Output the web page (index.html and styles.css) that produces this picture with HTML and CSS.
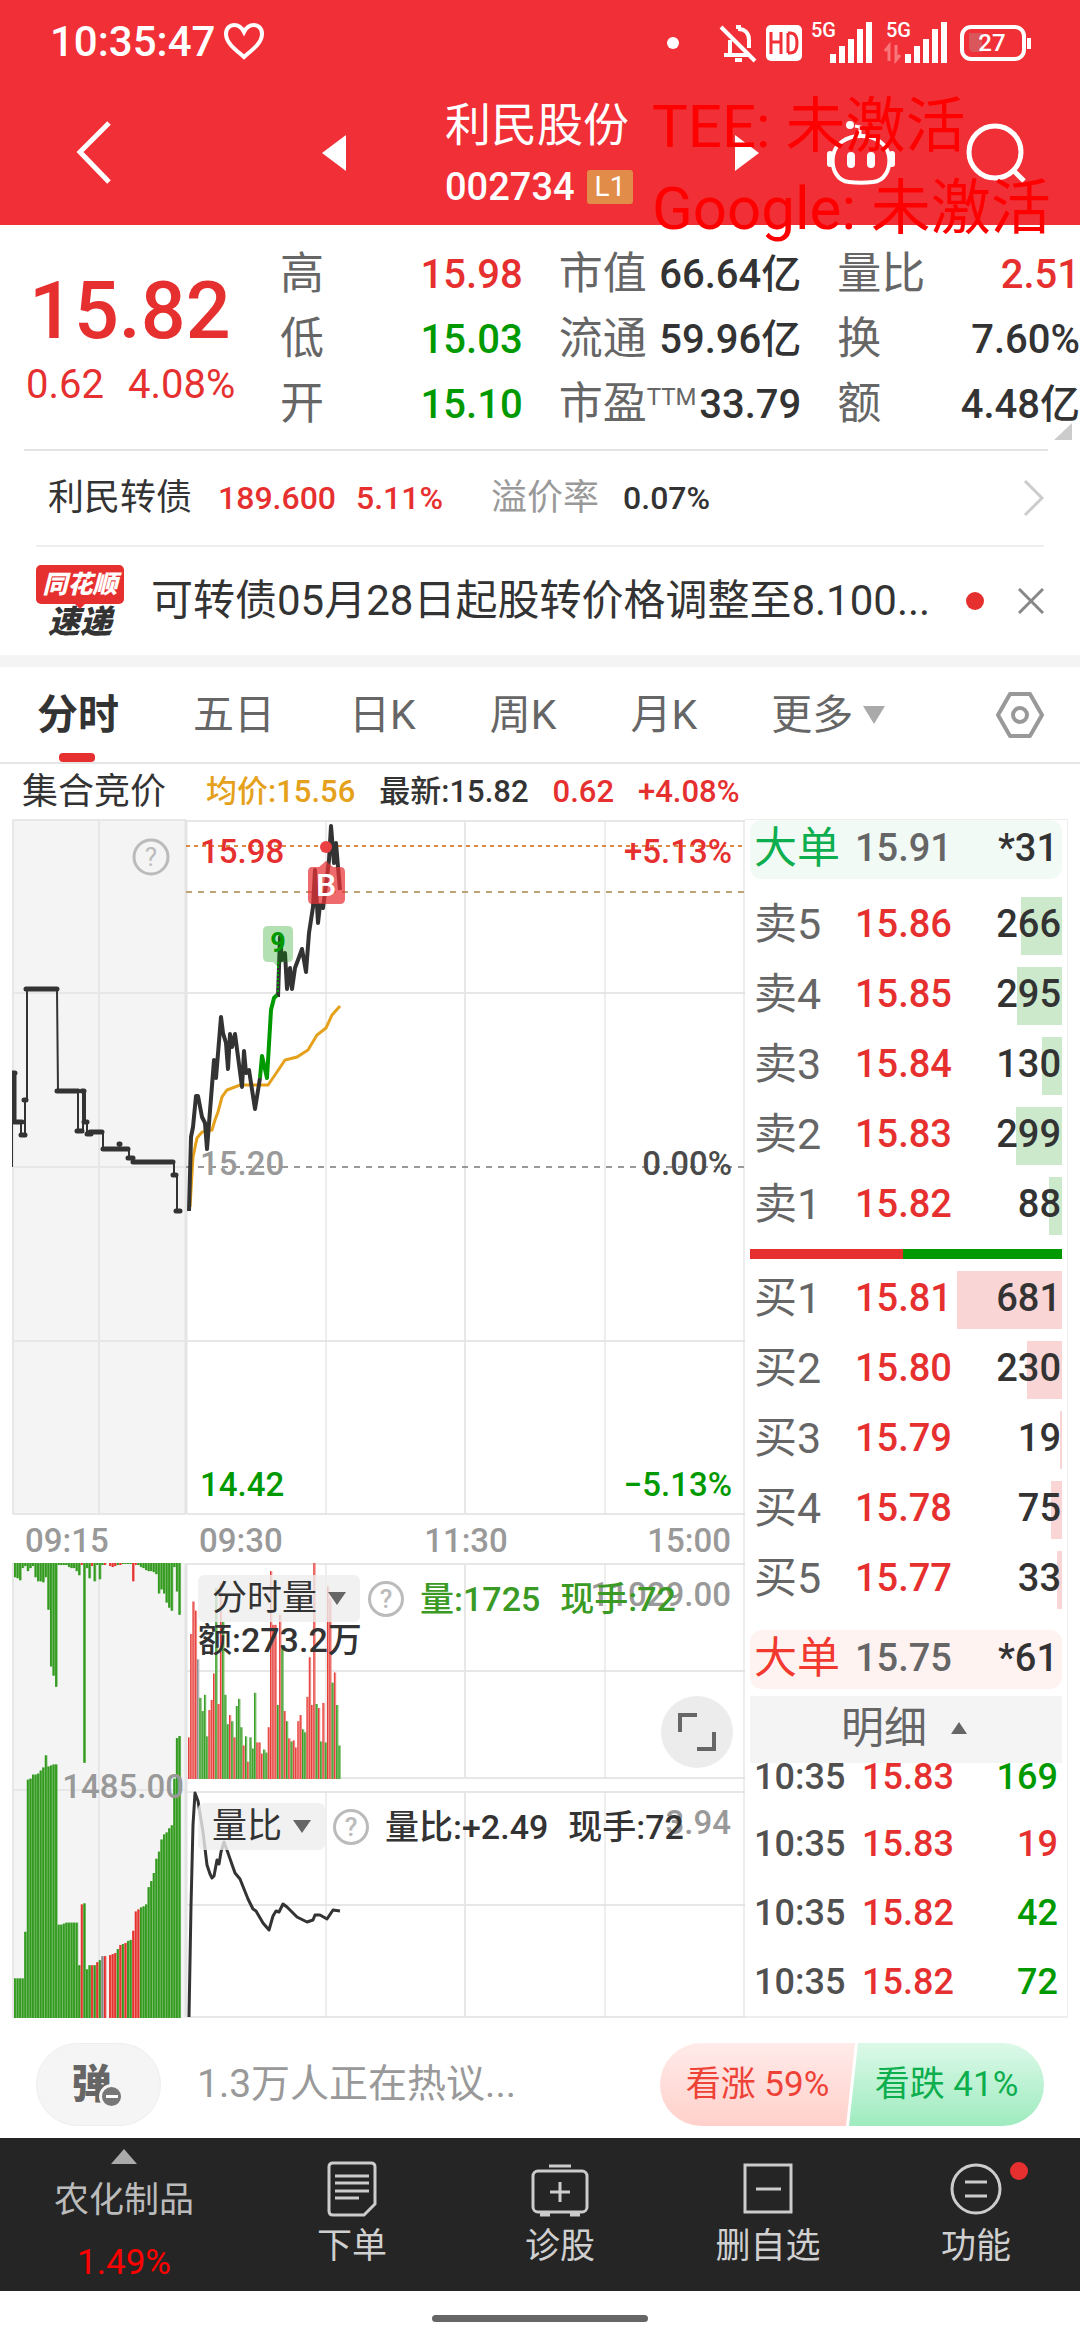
FILE: index.html
```
<!DOCTYPE html>
<html lang="zh-CN">
<head>
    <meta charset="UTF-8">
    <meta name="viewport" content="width=device-width, initial-scale=1.0">
    <title>利民股份 002734</title>
    <link rel="stylesheet" href="styles.css">
</head>
<body>
    <header class="top">
        <div class="statusbar">
            <span class="clock">10:35:47</span>
            <svg class="heart" width="42" height="38" viewBox="0 0 42 38"><path d="M21 35C13 28 3 21 3 12 3 6 7 3 11 3c4 0 8 3 10 7 2-4 6-7 10-7 4 0 8 3 8 9 0 9-10 16-18 23z" fill="none" stroke="#fff" stroke-width="4"/></svg>
            <svg class="signals" width="368" height="50" viewBox="664 13 368 50" fill="none" stroke="#fff">
                <circle cx="673" cy="40" r="6" fill="#fff" stroke="none"/>
                <path d="M721 24l34 34M724 52h24M730 51V37M738 26c7 0 11 4 11 11v8" stroke-width="4"/>
                <path d="M735 57h7M736 24h5" stroke-width="4"/>
                <rect x="766" y="22" width="36" height="36" rx="5" fill="#fff" stroke="none"/>
                <path d="M771 29v22M781 29v22M771 39h10M788 30v20M788 30h2c5 0 7 3 7 10s-2 10-7 10h-2" stroke="#f12f37" stroke-width="3"/>
                <path d="M833 60V51M842 60V43M851 60V36" stroke-width="6"/>
                <path d="M860 60V26M869 60V19" stroke-width="6"/>
                <path d="M908 60V51M917 60V43M926 60V36" stroke-width="6"/>
                <path d="M935 60V26M944 60V19" stroke-width="6"/>
                <path d="M889 58V43l-4 5M896 42v15l4-5" stroke="#f8777b" stroke-width="3"/>
                <rect x="962" y="24" width="62" height="32" rx="9" stroke-width="4"/>
                <path d="M969 30h13v19h-10l-3-3z" fill="#d9565b" stroke="none"/>
                <path d="M1029 35v11" stroke-width="4"/>
                <text class="sig-text" x="811" y="34">5G</text>
                <text class="sig-text" x="886" y="34">5G</text>
                <text class="bat-text" x="992" y="48" text-anchor="middle">27</text>
            </svg>
        </div>
        <nav class="titlebar">
            <button class="icon-btn" aria-label="返回"><svg width="40" height="66" viewBox="0 0 40 66"><path d="M34 3L5 32l29 30" fill="none" stroke="#fff" stroke-width="5"/></svg></button>
            <button class="icon-btn prev" aria-label="上一只"><svg width="24" height="36"><path d="M24 0v36L0 18z" fill="#fff"/></svg></button>
            <div class="title">
                <h1>利民股份</h1>
                <div class="code">002734 <span class="level">L1</span></div>
            </div>
            <button class="icon-btn next" aria-label="下一只"><svg width="24" height="36"><path d="M0 0v36l24-18z" fill="#fff"/></svg></button>
            <button class="icon-btn robot" aria-label="助手"><svg width="70" height="64" viewBox="0 0 70 64" fill="none" stroke="#fff" stroke-width="4"><path d="M35 15c15 0 26 8 28 20 2 14-5 25-16 26-8 1-16 1-24 0C12 60 5 49 7 35c2-12 13-20 28-20z"/><path d="M4 33v10M66 33v10" stroke-width="6" stroke-linecap="round"/><path d="M25 35v8M45 35v8" stroke-width="8" stroke-linecap="round"/><path d="M34 13V6l-5-1" stroke-width="3"/><circle cx="24" cy="4" r="4" fill="#fff" stroke="none"/></svg></button>
            <button class="icon-btn search" aria-label="搜索"><svg width="60" height="60" viewBox="0 0 60 60" fill="none" stroke="#fff" stroke-width="5"><circle cx="29" cy="29" r="26"/><path d="M47 47l11 11"/></svg></button>
        </nav>
        <div class="watermark">TEE: 未激活<br>Google: 未激活</div>
    </header>

    <section class="quote">
        <div class="price-box">
            <div class="price red">15.82</div>
            <div class="change red"><span>0.62</span><span>4.08%</span></div>
        </div>
        <dl class="stats">
            <div><dt>高</dt><dd class="red">15.98</dd></div>
            <div><dt>市值</dt><dd>66.64亿</dd></div>
            <div><dt>量比</dt><dd class="red">2.51</dd></div>
            <div><dt>低</dt><dd class="green">15.03</dd></div>
            <div><dt>流通</dt><dd>59.96亿</dd></div>
            <div><dt>换</dt><dd>7.60%</dd></div>
            <div><dt>开</dt><dd class="green">15.10</dd></div>
            <div><dt>市盈<sup>TTM</sup></dt><dd>33.79</dd></div>
            <div><dt>额</dt><dd>4.48亿</dd></div>
        </dl>
        <svg class="corner" width="18" height="17"><path d="M18 0v17H0z" fill="#ccc"/></svg>
    </section>

    <a class="bond" href="#bond">
        <span class="bond-name">利民转债</span>
        <b class="red">189.600</b>
        <b class="red">5.11%</b>
        <span class="premium">溢价率</span>
        <b>0.07%</b>
        <svg width="24" height="38" viewBox="0 0 24 38"><path d="M3 2l17 17L3 36" fill="none" stroke="#ccc" stroke-width="3"/></svg>
    </a>

    <section class="news">
        <div class="news-logo"><span class="logo-top">同花顺</span><span class="logo-bottom">速递</span></div>
        <a class="news-title" href="#news">可转债05月28日起股转价格调整至8.100...</a>
        <i class="dot"></i>
        <button class="icon-btn" aria-label="关闭"><svg width="26" height="26"><path d="M1 1l24 24M25 1L1 25" stroke="#888" stroke-width="3"/></svg></button>
    </section>

    <nav class="tabs">
        <button class="tab active">分时</button>
        <button class="tab">五日</button>
        <button class="tab">日K</button>
        <button class="tab">周K</button>
        <button class="tab">月K</button>
        <button class="tab more">更多<svg width="22" height="18"><path d="M0 0h22L11 18z" fill="#aaa"/></svg></button>
        <button class="icon-btn settings" aria-label="设置"><svg width="50" height="46" viewBox="0 0 50 46" fill="none" stroke="#999" stroke-width="4"><path d="M15 2h20l12 21-12 21H15L3 23z" stroke-linejoin="round"/><circle cx="25" cy="23" r="7"/></svg></button>
    </nav>

    <div class="summary">
        <span class="auction-label">集合竞价</span>
        <span class="orange">均价:15.56</span>
        <span>最新:15.82</span>
        <span class="red">0.62</span>
        <span class="red">+4.08%</span>
    </div>

    <main class="board">
        <section class="chart">
            <svg class="chart-svg" viewBox="12 819 733 1199" fill="none">
                <!-- auction panel -->
                <g fill="#f4f4f4">
                    <path d="M12 819h174v695H12zM12 1563h174v455H12z"/>
                </g>
                <g stroke="#e7e7e7" stroke-width="2">
                    <path d="M13 820v694M99 820v694M13 820h173M13 993h173M13 1167h173M13 1341h173M13 1514h173"/>
                    <path d="M13 1563v455M99 1563v455M13 1790h173"/>
                    <path d="M187 821h558M187 993h558M187 1341h558M187 1514h558M465 821v693"/>
                    <path d="M187 1564h558M187 1671h558M187 1778h558M187 1792h558M187 1905h558M187 2017h558M465 1564v214M465 1792v225"/>
                </g>
                <path d="M186 820v694M186 1563v454" stroke="#e4e4e4" stroke-width="3"/>
                <path d="M326 821v693M605 821v693M326 1564v214M605 1564v214M326 1792v225M605 1792v225M744 821v1196" stroke="#ddd"/>

                <!-- level lines -->
                <path d="M186 846h558" stroke="#d98a45" stroke-width="2" stroke-dasharray="4 4"/>
                <path d="M186 892h558" stroke="#bda377" stroke-width="2" stroke-dasharray="6 6"/>
                <path d="M186 1167h558" stroke="#999" stroke-width="2" stroke-dasharray="6 6"/>

                <g class="axis">
                    <text class="fill-red" x="200" y="863">15.98</text>
                    <text class="fill-muted" x="200" y="1175">15.20</text>
                    <text class="fill-green" x="200" y="1496">14.42</text>
                    <text class="fill-red" x="732" y="863" text-anchor="end">+5.13%</text>
                    <text class="fill-dark" x="732" y="1175" text-anchor="end">0.00%</text>
                    <text class="fill-green" x="732" y="1496" text-anchor="end">−5.13%</text>
                    <text class="fill-muted" x="25" y="1552">09:15</text>
                    <text class="fill-muted" x="199" y="1552">09:30</text>
                    <text class="fill-muted" x="466" y="1552" text-anchor="middle">11:30</text>
                    <text class="fill-muted" x="731" y="1552" text-anchor="end">15:00</text>
                    <text class="fill-muted" x="731" y="1606" text-anchor="end">11029.00</text>
                    <text class="fill-muted" x="731" y="1834" text-anchor="end">3.94</text>
                </g>

                <!-- auction price steps -->
                <path d="M12 1167V1073h3v49h6v13h4v-35h2V989h30l1 102h20v40h5v-40h2v31h2v12h3v-2h13v17h26v9h4v4h41v13h3v36h4" stroke="#333" stroke-width="2"/>
                <path d="M12 1073h3M14 1122h8M21 1135h4M24 1100h2M26 989h31M57 1091h21M77 1131h5M82 1091h2M84 1122h3M87 1134h4M90 1132h12M103 1149h25M119 1144h1M128 1158h5M133 1162h40M173 1175h3M176 1211h4M14 1075v46" stroke="#333" stroke-width="5" stroke-linecap="round"/>

                <polyline points="190,1207 193,1157 197,1138 202,1132 212,1130 215,1120 218,1112 222,1097 227,1090 240,1085 268,1085 277,1072 285,1060 297,1057 308,1050 317,1035 326,1028 332,1015 340,1006" stroke="#e5a11b" stroke-width="3"/>
                <g stroke="#333" stroke-width="4" stroke-linejoin="round">
                    <polyline points="189,1211 191,1137 193,1127 196,1096 198,1096 202,1117 205,1123 207,1149 214,1060 216,1078 221,1017 223,1033 226,1043 228,1069 230,1034 232,1047 235,1034 242,1087 244,1051 246,1073 249,1070 255,1109 260,1078"/>
                    <polyline points="278,997 280,937 282,960 285,953 287,989 290,968 292,989 295,968 298,960 302,949 306,972 309,933 313,907 315,870 318,923 320,905 323,908 327,877 329,860 331,826 334,863 336,843 338,867 340,890"/>
                </g>
                <polyline points="260,1078 262,1056 267,1078 271,1010 274,998 277,995" stroke="#090" stroke-width="4" stroke-linejoin="round"/>
                <path d="M278 992v-30" stroke="#090" stroke-width="2" stroke-dasharray="2 2"/>

                <path d="M268 926h20q5 0 5 5v26q0 5-5 5h-5l-5 5-5-5h-5q-5 0-5-5v-26q0-5 5-5z" fill="#090" fill-opacity=".3"/>
                <text class="mark-nine" x="278" y="952" text-anchor="middle">9</text>
                <circle cx="326" cy="847" r="6" fill="#ea4044"/>
                <path d="M312 867h7l7-6 7 6h7q5 0 5 5v27q0 5-5 5h-28q-4 0-4-5v-27q0-5 4-5z" fill="#e93035" fill-opacity=".72"/>
                <text class="mark-b" x="326" y="896" text-anchor="middle">B</text>

                <circle cx="151" cy="857" r="17" stroke="#bbb" stroke-width="3"/>
                <text class="help-text" x="151" y="866" text-anchor="middle">?</text>

                <g id="auctionTop"></g>
                <g id="auctionBottom"></g>
                <g id="volume"></g>
                <text class="axis fill-muted" x="184" y="1798" text-anchor="end">1485.00</text>

                <polyline points="189,2017 191,1906 193,1825 195,1793 198,1801 203,1832 207,1865 210,1874 212,1878 214,1876 217,1860 219,1864 221,1852 224,1842 228,1853 235,1873 240,1879 248,1899 253,1909 256,1911 263,1923 269,1930 273,1916 276,1911 279,1912 283,1904 287,1907 297,1917 307,1922 313,1920 315,1915 320,1915 327,1919 333,1910 340,1911" stroke="#333" stroke-width="3" stroke-linejoin="round"/>
            </svg>

            <div class="indicator volume-bar">
                <button class="picker">分时量<svg width="18" height="13"><path d="M0 0h18L9 13z" fill="#666"/></svg></button>
                <button class="help">?</button>
                <span class="ind-green">量:1725</span>
                <span class="ind-green">现手:72</span>
                <span class="amount">额:273.2万</span>
            </div>
            <div class="indicator ratio-bar">
                <button class="picker">量比<svg width="18" height="13"><path d="M0 0h18L9 13z" fill="#666"/></svg></button>
                <button class="help">?</button>
                <span>量比:+2.49</span>
                <span>现手:72</span>
            </div>
            <button class="expand" aria-label="全屏"><svg width="38" height="38" fill="none" stroke="#666" stroke-width="4"><path d="M2 19V2h17M36 19v17H19"/></svg></button>
        </section>

        <section class="book">
            <div class="big-order sell"><span>大单</span><b>15.91</b><b>*31</b></div>
            <div class="levels" id="asks"></div>
            <div class="balance"><i></i></div>
            <div class="levels" id="bids"></div>
            <div class="big-order buy"><span>大单</span><b>15.75</b><b>*61</b></div>
            <button class="detail">明细<svg width="16" height="12"><path d="M0 12h16L8 0z" fill="#666"/></svg></button>
            <div class="ticks">
                <div><span>10:35</span><b class="red">15.83</b><b class="green">169</b></div>
                <div><span>10:35</span><b class="red">15.83</b><b class="red">19</b></div>
                <div><span>10:35</span><b class="red">15.82</b><b class="green">42</b></div>
                <div><span>10:35</span><b class="red">15.82</b><b class="green">72</b></div>
            </div>
        </section>
    </main>

    <section class="chat">
        <button class="danmu" aria-label="弹幕"><span>弹</span><i></i></button>
        <a class="talk" href="#talk">1.3万人正在热议...</a>
        <div class="vote">
            <button class="up">看涨 59%</button>
            <button class="down">看跌 41%</button>
        </div>
    </section>

    <nav class="bottom">
        <a class="sector" href="#sector"><svg width="26" height="15"><path d="M0 15h26L13 0z" fill="#aaa"/></svg><span>农化制品</span><em>1.49%</em></a>
        <a href="#trade"><svg width="50" height="56" viewBox="0 0 50 56" fill="none" stroke="#ccc" stroke-width="3"><path d="M6 2h38q4 0 4 4v37L37 54H6q-4 0-4-4V6q0-4 4-4zM8 15h34M8 22h34M8 30h34M8 37h24"/></svg>下单</a>
        <a href="#diagnose"><svg width="58" height="56" viewBox="0 0 58 56" fill="none" stroke="#ccc" stroke-width="3"><rect x="2" y="10" width="54" height="41" rx="5"/><path d="M18 5h22M29 21v20M19 31h20"/><path d="M9 53h10M39 53h10" stroke-width="5"/></svg>诊股</a>
        <a href="#remove"><svg width="50" height="56" viewBox="0 0 50 56" fill="none" stroke="#ccc" stroke-width="3"><path d="M2 4h46v47H2zM13 28h25"/></svg>删自选</a>
        <a class="features" href="#features"><svg width="52" height="56" viewBox="0 0 52 56" fill="none" stroke="#ccc" stroke-width="3"><circle cx="26" cy="28" r="24"/><path d="M15 21h22M15 35h22"/></svg>功能<i class="dot"></i></a>
    </nav>
    <div class="home"><i></i></div>

    <script>
        const NS = 'http://www.w3.org/2000/svg';
        const BAR_UNIT = 1.014;
        const COLORS = {
            g: ['#339a1f', '#76bd69'],
            r: ['#e5342f', '#f08a86'],
            x: ['#888888', '#bbbbbb']
        };

        // bars is "height+colour" separated by spaces, e.g. "14g 18r"
        function drawBars(id, bars, x, pitch, baseY, down, thin) {
            const group = document.getElementById(id);
            bars.split(' ').forEach((bar, i) => {
                const height = parseInt(bar, 10) * BAR_UNIT;
                const colors = COLORS[bar.slice(-1)];
                [[pitch, colors[1]], [pitch * (thin ? 0.4 : 0.7), colors[0]]].forEach(([width, color]) => {
                    const rect = document.createElementNS(NS, 'rect');
                    rect.setAttribute('x', x + i * pitch);
                    rect.setAttribute('y', down ? baseY : baseY - height);
                    rect.setAttribute('width', width);
                    rect.setAttribute('height', height);
                    rect.setAttribute('fill', color);
                    group.appendChild(rect);
                });
            });
        }

        drawBars('auctionTop', '14g 15g 17g 5g 3g 8g 5g 3g 14g 18g 18g 19g 14g 46g 102g 111g 122g 2g 2g 2g 2g 4g 5g 5g 8g 12g 2r 197g 5g 15g 3r 18g 2g 16g 2g 2r 0g 3r 4r 3r 2g 2r 1g 1g 1g 1g 18r 2r 2g 4g 5g 7g 8g 8g 9g 11g 30g 26g 30g 39g 44g 47g 4g 28g 51g', 14, 2.57, 1563, true);
        drawBars('auctionBottom', '39g 39g 39g 39g 85g 235g 236g 240g 240g 241g 244g 247g 259g 248g 249g 250g 250g 92g 92g 93g 94g 94g 94g 94g 94g 52g 112r 113g 48g 52g 52r 52g 55r 57g 61x 61r 0r 62r 63r 64r 68g 72r 73g 74r 76g 77g 86r 105r 107r 109g 110g 112g 129g 135g 143g 157g 164g 176g 181g 183g 187g 190g 236g 276g 278g', 14, 2.57, 2018);
        drawBars('volume', '41r 143r 175r 166r 118x 80g 67g 83g 42g 68r 78r 104r 188g 74r 193r 155g 83g 54g 63r 57g 41r 72g 79g 51g 33r 42g 17r 41g 30g 85g 36r 36r 25r 29g 26g 51r 205r 152r 152r 73g 162r 132g 67r 57g 40r 37g 38r 31r 57r 63r 49g 46g 81r 120r 73r 213r 74g 70r 37g 75r 36g 190r 178r 95g 105r 73g 33g', 188, 2.28, 1779, false, true);

        // label, price, volume, depth bar width in % of the row
        const asks = [['卖5', '15.86', 266, 13], ['卖4', '15.85', 295, 14.5], ['卖3', '15.84', 130, 6.5], ['卖2', '15.83', 299, 14.8], ['卖1', '15.82', 88, 4.2]];
        const bids = [['买1', '15.81', 681, 33.6], ['买2', '15.80', 230, 11.2], ['买3', '15.79', 19, 0.7], ['买4', '15.78', 75, 3.5], ['买5', '15.77', 33, 1.6]];

        function drawLevels(id, rows) {
            document.getElementById(id).innerHTML = rows.map(([label, price, volume, depth]) =>
                `<div class="level-row"><i style="width: ${depth}%"></i><span>${label}</span><b class="red">${price}</b><b>${volume}</b></div>`
            ).join('');
        }

        drawLevels('asks', asks);
        drawLevels('bids', bids);
    </script>
</body>
</html>
```
FILE: styles.css
```
* {
    box-sizing: border-box;
}
body {
    margin: 0;
    background: #fff;
    color: #333;
    font-family: Roboto, "Noto Sans CJK SC", sans-serif;
    font-size: 36px;
}
button {
    padding: 0;
    border: none;
    background: none;
    color: inherit;
    font: inherit;
    cursor: pointer;
}
a {
    color: inherit;
    text-decoration: none;
}
svg {
    display: block;
    flex: none;
}
b {
    font-weight: 500;
}
.red {
    color: #e6302f;
}
.green {
    color: #090;
}
.orange {
    color: #e5a11b;
}
.icon-btn {
    display: flex;
    flex: none;
}
.dot {
    width: 18px;
    height: 18px;
    border-radius: 50%;
    background: #e6302f;
    flex: none;
}

/* header */
.top {
    position: relative;
    background: #f12f37;
    color: #fff;
}
.statusbar {
    display: flex;
    align-items: center;
    height: 80px;
    padding: 2px 48px 0 50px;
}
.clock {
    font-size: 42px;
    font-weight: 500;
}
.heart {
    margin-left: 8px;
}
.signals {
    margin-left: auto;
    overflow: visible;
}
.sig-text {
    font-size: 20px;
    font-weight: 500;
    fill: #fff;
    stroke: none;
}
.bat-text {
    font-size: 24px;
    font-weight: 500;
    fill: #fff;
    stroke: none;
}
.titlebar {
    display: flex;
    align-items: center;
    height: 145px;
    padding: 0 54px 0 75px;
}
.prev {
    margin-left: 207px;
}
.title {
    margin-left: 99px;
    padding-top: 5px;
    white-space: nowrap;
}
.title h1 {
    margin: 0;
    font-size: 46px;
    font-weight: 400;
    line-height: 64px;
}
.code {
    display: flex;
    align-items: center;
    gap: 12px;
    font-size: 38px;
    font-weight: 500;
    line-height: 60px;
}
.level {
    padding: 0 8px;
    border-radius: 3px;
    background: #e28c4a;
    font-size: 28px;
    font-weight: 400;
    line-height: 34px;
}
.next {
    margin-left: auto;
}
.robot {
    margin-left: 67px;
}
.search {
    margin-left: 70px;
}
.watermark {
    position: absolute;
    top: 86px;
    right: 30px;
    width: 398px;
    color: #f00;
    font-size: 60px;
    line-height: 82px;
    white-space: nowrap;
}

/* quote */
.quote {
    position: relative;
    display: flex;
    height: 224px;
    padding-top: 17px;
}
.price-box {
    width: 264px;
    padding: 20px 0 0 26px;
    flex: none;
}
.price {
    padding-left: 3px;
    font-size: 79px;
    font-weight: 500;
    line-height: 98px;
}
.change {
    display: flex;
    gap: 24px;
    font-size: 40px;
    line-height: 50px;
}
.stats {
    flex: 1;
    display: grid;
    grid-template-columns: repeat(3, 1fr);
    column-gap: 36px;
    margin: 0;
    padding: 0 0 0 16px;
    align-content: start;
}
.stats div {
    display: flex;
    justify-content: space-between;
    line-height: 65px;
    white-space: nowrap;
}
.stats dt {
    color: #666;
    font-size: 44px;
}
.stats sup {
    display: inline-block;
    font-size: 24px;
    line-height: 24px;
    vertical-align: 14px;
}
.stats dd {
    margin: 0;
    font-size: 40px;
    font-weight: 500;
}
.corner {
    position: absolute;
    right: 8px;
    bottom: 9px;
}
.bond {
    display: flex;
    align-items: center;
    height: 96px;
    margin: 0 32px 0 24px;
    padding: 0 2px 0 24px;
    border-top: 2px solid #e4e4e4;
    font-size: 36px;
    line-height: 40px;
}
.bond b {
    margin-right: 20px;
    font-size: 32px;
}
.bond-name {
    margin-right: 26px;
}
.premium {
    margin: 0 24px 0 28px;
    color: #999;
}
.bond svg {
    margin-left: auto;
}
.news {
    display: flex;
    align-items: center;
    height: 110px;
    margin: 0 36px;
    border-top: 2px solid #eee;
}
.news-logo {
    display: flex;
    flex-direction: column;
    align-items: center;
    width: 88px;
    padding-top: 2px;
    font-style: italic;
    font-weight: 900;
    white-space: nowrap;
}
.logo-top {
    position: relative;
    width: 88px;
    border-radius: 5px;
    background: #e6302f;
    color: #fff;
    font-size: 25px;
    line-height: 39px;
    text-align: center;
}
.logo-top::after {
    content: "";
    position: absolute;
    left: 38px;
    top: 38px;
    border: 6px solid transparent;
    border-top-color: #e6302f;
}
.logo-bottom {
    font-size: 32px;
    line-height: 36px;
}
.news-title {
    flex: 1;
    margin-left: 27px;
    font-size: 42px;
    line-height: 60px;
    white-space: nowrap;
    overflow: hidden;
}
.news .icon-btn {
    margin-left: 34px;
}

/* tabs */
.tabs {
    display: flex;
    align-items: center;
    height: 109px;
    padding: 0 35px 0 37px;
    border-top: 12px solid #f4f4f4;
    border-bottom: 2px solid #e6e6e6;
    color: #666;
    font-size: 41px;
    line-height: 48px;
}
.tab {
    display: flex;
    align-items: center;
    height: 100%;
    margin-right: 74px;
    white-space: nowrap;
}
.tab.active {
    position: relative;
    color: #333;
    font-weight: 700;
}
.tab.active::after {
    content: "";
    position: absolute;
    left: 22px;
    bottom: 0;
    width: 36px;
    height: 9px;
    border-radius: 4px;
    background: #e6302f;
}
.tab svg {
    margin-left: 10px;
}
.tab.more {
    margin-right: 0;
}
.settings {
    margin-left: auto;
}
.summary {
    display: flex;
    align-items: center;
    gap: 24px;
    height: 55px;
    padding: 0 22px;
    font-weight: 500;
    line-height: 40px;
    white-space: nowrap;
}
.summary span {
    font-size: 31px;
}
.summary .auction-label {
    margin-right: 16px;
    font-size: 36px;
    font-weight: 400;
}

/* chart and order book */
.board {
    display: grid;
    grid-template-columns: minmax(0, 733fr) minmax(0, 323fr);
    margin: 0 12px;
}
.chart {
    position: relative;
}
.chart-svg {
    width: 100%;
    height: auto;
}
.axis {
    font-size: 33px;
    font-weight: 500;
}
.fill-red {
    fill: #e6302f;
}
.fill-green {
    fill: #090;
}
.fill-muted {
    fill: #999;
}
.fill-dark {
    fill: #4a4a4a;
}
.mark-nine {
    fill: #090;
    font-size: 27px;
    font-weight: 700;
}
.mark-b {
    fill: #fff;
    font-size: 32px;
    font-weight: 500;
}
.help-text {
    fill: #bbb;
    font-size: 26px;
}
.indicator {
    position: absolute;
    left: 186px;
    display: flex;
    align-items: center;
    flex-wrap: wrap;
    font-size: 34px;
    font-weight: 500;
    line-height: 36px;
}
.volume-bar {
    top: 756px;
}
.ratio-bar {
    top: 984px;
}
.picker {
    display: flex;
    align-items: center;
    gap: 11px;
    height: 47px;
    padding: 0 14px;
    border-radius: 6px;
    background: rgba(238, 238, 238, 0.8);
    font-size: 35px;
    font-weight: 400;
}
.help {
    width: 36px;
    height: 36px;
    margin: 0 16px 0 8px;
    border: 3px solid #bbb;
    border-radius: 50%;
    color: #bbb;
    font-size: 26px;
    line-height: 30px;
}
.indicator span {
    margin-right: 20px;
}
.indicator .ind-green {
    color: #3a9a24;
}
.indicator .amount {
    flex-basis: 100%;
}
.expand {
    position: absolute;
    top: 877px;
    right: 12px;
    display: flex;
    align-items: center;
    justify-content: center;
    width: 72px;
    height: 72px;
    border-radius: 50%;
    background: #ececec;
}
.book {
    display: flex;
    flex-direction: column;
    padding: 0 5px;
    border: 1px solid #eee;
    border-left: none;
    border-bottom-width: 2px;
}
.big-order,
.level-row,
.ticks div {
    display: grid;
    grid-template-columns: 101px 100px 1fr;
    align-items: center;
    padding-left: 4px;
    line-height: 44px;
    white-space: nowrap;
}
.big-order b,
.level-row b {
    font-size: 38px;
}
.big-order b:last-child,
.level-row b:last-child,
.ticks b:last-child {
    text-align: right;
}
.big-order {
    height: 59px;
    padding-right: 4px;
    padding-bottom: 4px;
    border-radius: 12px;
    font-size: 43px;
}
.big-order b:nth-child(2) {
    color: #666;
}
.sell {
    margin-bottom: 18px;
    background: #f1faf5;
    color: #0cae4e;
}
.buy {
    margin-top: 21px;
    background: #fff3f2;
    color: #f2392f;
}
.big-order b:last-child {
    color: #333;
}
.levels {
    display: flex;
    flex-direction: column;
    gap: 12px;
}
.level-row {
    position: relative;
    height: 58px;
    padding-right: 1px;
    padding-bottom: 4px;
}
.level-row i {
    position: absolute;
    top: 0;
    right: 0;
    bottom: 0;
    background: #cce9cc;
}
#bids .level-row i {
    background: #f9d5d5;
}
.level-row span,
.level-row b {
    position: relative;
}
.level-row span {
    color: #666;
    font-size: 43px;
}
.balance {
    height: 10px;
    margin: 14px 0 12px;
    background: #090;
}
.balance i {
    display: block;
    width: 49%;
    height: 100%;
    background: #e6302f;
}
.detail {
    display: flex;
    align-items: center;
    justify-content: center;
    gap: 24px;
    height: 67px;
    margin-top: 7px;
    padding: 0 4px 4px 0;
    background: #f4f4f4;
    color: #666;
    font-size: 43px;
    line-height: 44px;
}
.ticks {
    flex: 1;
    padding-right: 4px;
    overflow: hidden;
    font-size: 36px;
}
.ticks div {
    grid-template-columns: 108px 90px 1fr;
    height: 69px;
}
.ticks div:first-child {
    height: 46px;
    align-items: start;
    line-height: 28px;
}
.ticks span {
    color: #505050;
    font-weight: 500;
}

/* discussion row */
.chat {
    display: flex;
    align-items: flex-start;
    height: 120px;
    padding: 25px 36px 0;
    line-height: 83px;
}
.danmu {
    position: relative;
    width: 125px;
    height: 83px;
    border: 1px solid #eee;
    border-radius: 42px;
    background: #f5f5f5;
    color: #666;
    font-size: 40px;
    font-weight: 900;
    line-height: 76px;
}
.danmu span {
    margin-right: 14px;
}
.danmu i {
    position: absolute;
    left: 62px;
    top: 40px;
    width: 25px;
    height: 25px;
    border: 3px solid #f5f5f5;
    border-radius: 50%;
    background: linear-gradient(#fff, #fff) center / 12px 3px no-repeat, #777;
}
.talk {
    margin-left: 36px;
    color: #999;
    font-size: 39px;
}
.vote {
    display: flex;
    margin-left: auto;
    width: 384px;
    height: 83px;
    border-radius: 42px;
    overflow: hidden;
    font-size: 35px;
}
.vote button {
    flex: 1;
}
.vote .up {
    margin-right: -3px;
    background: linear-gradient(#ffebe9, #ffd0cb);
    color: #ee4237;
    clip-path: polygon(0 0, 100% 0, calc(100% - 9px) 100%, 0 100%);
}
.vote .down {
    margin-left: -3px;
    background: linear-gradient(#dcf9e8, #9eebbf);
    color: #0cae4e;
    clip-path: polygon(9px 0, 100% 0, 100% 100%, 0 100%);
}

/* bottom bar */
.bottom {
    display: grid;
    grid-template-columns: 248fr 208fr 208fr 208fr 208fr;
    height: 153px;
    background: #252525;
    color: #d0d0d0;
    font-size: 35px;
    line-height: 44px;
}
.bottom a {
    position: relative;
    display: flex;
    flex-direction: column;
    align-items: center;
    gap: 8px;
    padding-top: 23px;
}
.bottom .sector {
    gap: 15px;
    padding-top: 11px;
    color: #bbb;
}
.sector em {
    margin-top: 3px;
    color: #f00;
    font-size: 35px;
    font-style: normal;
}
.features .dot {
    position: absolute;
    top: 24px;
    left: 138px;
}
.home {
    display: flex;
    justify-content: center;
    padding: 24px 0 18px;
}
.home i {
    width: 20%;
    height: 7px;
    border-radius: 4px;
    background: #666;
}
```
